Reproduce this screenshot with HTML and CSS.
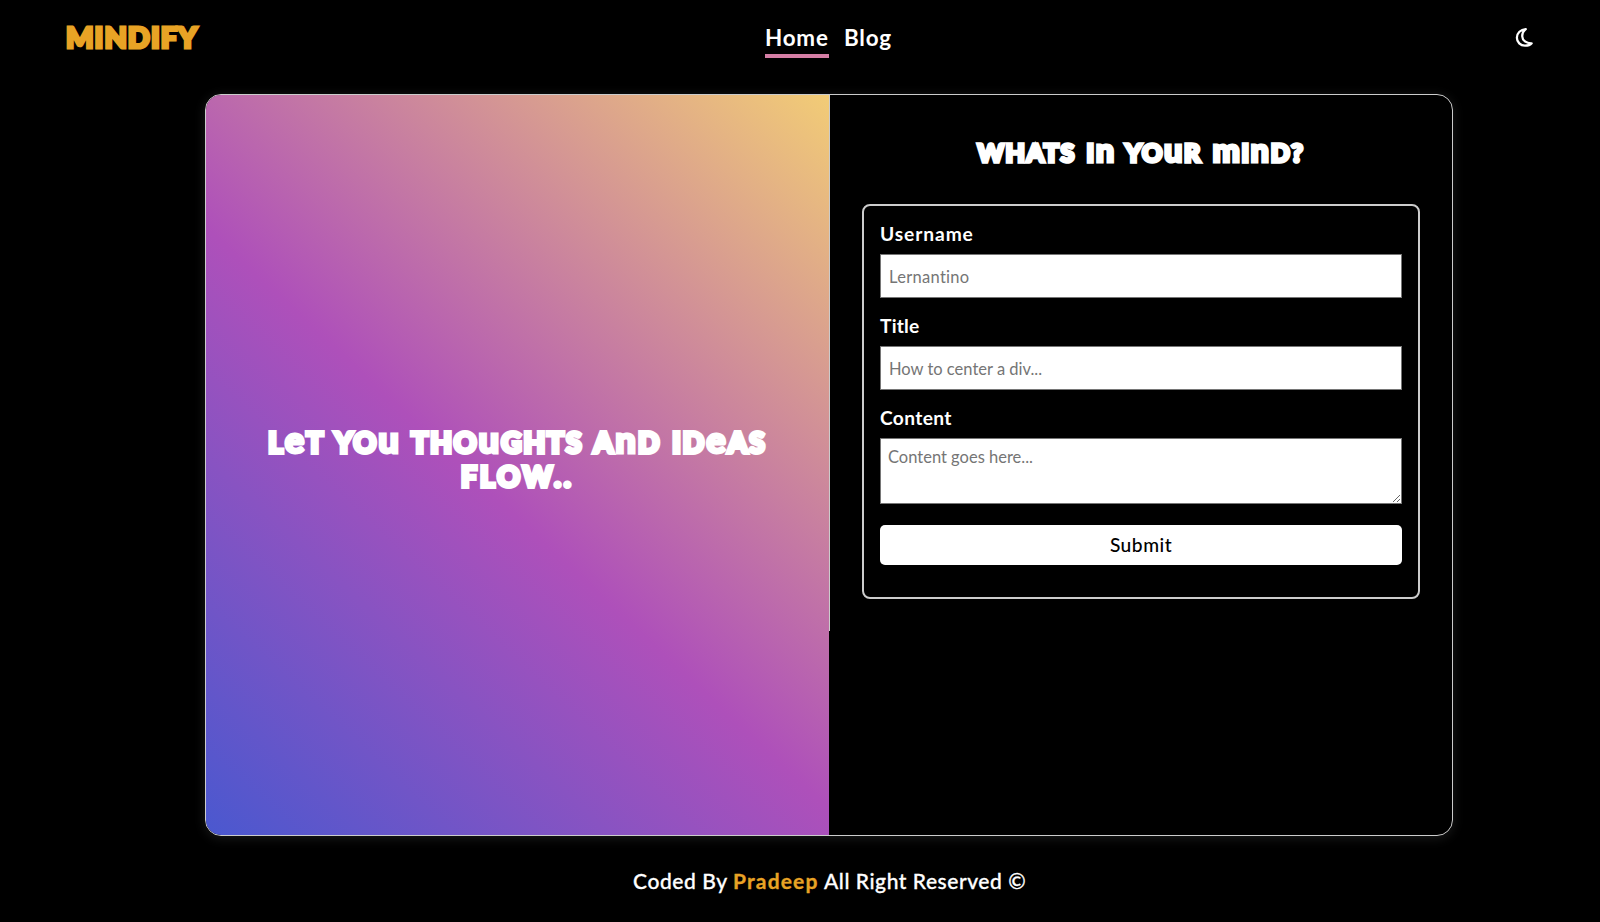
FILE: index.html
```html
<!DOCTYPE html>
<html lang="en">
<head>
<meta charset="utf-8">
<title>Mindify</title>
<link rel="stylesheet" href="styles.css">
</head>
<body>
<header class="header">
  <div class="logo">MINDIFY</div>
  <nav class="nav"><a class="link active"><span class="t-home">Home</span></a><a class="link"><span class="t-blog">Blog</span></a></nav>
  <div class="theme"><svg class="moon" viewBox="0 0 24 24" fill="none" stroke="#fff" stroke-width="2.6" stroke-linejoin="round"><path d="M13.400 2.400C7.600 2.800 3.300 6.800 3.300 12.200C3.300 17.400 7.400 21.400 12.500 21.400C15.800 21.400 18.600 20.600 20.200 18.600C14 18.800 9.600 15.500 9.400 10.500C9.300 7 10.900 4.500 13.400 2.400Z"/></svg></div>
</header>
<main class="card">
  <section class="hero">
    <h1 class="display hero-title"><span class="line l1">L<i>e</i>T YO<i>u</i> THO<i>u</i>GHTS A<i>n</i>D ID<i>e</i>AS</span><span class="line l2">FLOW..</span></h1>
  </section>
  <section class="side">
    <h2 class="display side-title"><span class="line l3">WHATS I<i>n</i> YO<i>u</i>R <i>m</i>I<i>n</i>D?</span></h2>
    <form class="form">
      <label class="label"><span class="t-user">Username</span></label>
      <input class="field f-user" placeholder="Lernantino">
      <label class="label"><span class="t-title">Title</span></label>
      <input class="field f-title" placeholder="How to center a div...">
      <label class="label"><span class="t-content">Content</span></label>
      <textarea class="field area" placeholder="Content goes here..."></textarea>
      <button class="submit" type="button">Submit</button>
    </form>
  </section>
</main>
<footer class="footer"><span class="f1">Coded By</span><b class="f2">Pradeep</b><span class="f3">All Right Reserved ©</span></footer>
</body>
</html>
```

FILE: styles.css
```css
* { box-sizing: border-box; }
body { margin: 0; height: 922px; overflow: hidden; background: #000; color: #fff; font-family: Lato, sans-serif; display: flex; flex-direction: column; }
.header { height: 94px; padding: 0 65px; display: flex; align-items: flex-start; }
.logo { width: 700px; padding: 17px 0 0 1px; font-weight: 900; font-size: 29px; line-height: 40px; color: #e8a325; -webkit-text-stroke: 3.2px #e8a325; letter-spacing: 1px; white-space: nowrap; }
.nav { display: flex; gap: 15px; padding-top: 22px; }
.link { height: 36px; line-height: 32px; font-size: 22.4px; font-weight: 700; white-space: nowrap; letter-spacing: .8px; }
.active { width: 64px; border-bottom: 4px solid #d57ea5; }
.theme { margin-left: auto; padding-top: 27px; }
.moon { display: block; width: 21px; height: 21px; }
.card { width: 1248px; height: 742px; margin-left: 205px; flex: none; display: grid; grid-template-columns: 623px 1fr; align-items: start; border: 1px solid #ccc; border-radius: 16px; overflow: hidden; box-shadow: 0 2px 12px rgba(210, 225, 220, .12); }
.hero { height: 740px; display: flex; align-items: center; justify-content: center; background: linear-gradient(43deg, #4a58cf 0%, #ae50ba 46%, #f2cc76 100%); }
.display { margin: 0; font-weight: 900; display: flex; flex-direction: column; align-items: center; white-space: nowrap; }
.display i { font-style: normal; font-size: 1.3em; line-height: 0; -webkit-text-stroke-width: 3px; }
.hero-title { font-size: 28px; line-height: 34px; letter-spacing: 2px; word-spacing: 2.5px; -webkit-text-stroke: 4px #fff; padding-bottom: 12px; }
.l2 { letter-spacing: 3.2px; }
.side { height: 536px; border-left: 1px solid #ccc; padding: 0 32px; }
.side-title { height: 109px; padding-top: 37px; font-size: 25px; line-height: 40px; letter-spacing: 1.6px; word-spacing: 3px; -webkit-text-stroke: 3.4px #fff; }
.form { height: 395px; border: 2px solid #ccc; border-radius: 8px; padding: 12px 16px 0; display: flex; flex-direction: column; }
.label { height: 36px; line-height: 32px; font-size: 19.2px; font-weight: 700; }
.t-user { letter-spacing: .9px; }
.t-title { letter-spacing: .2px; }
.t-content { letter-spacing: .35px; }
.field { flex: none; height: 44px; margin: 0 0 12px; padding: 2px 8px 0; border: 1px solid #767676; border-radius: 0; background: #fff; font: 400 16.5px Lato, sans-serif; }
.f-user { letter-spacing: .3px; }
.field::placeholder { color: #757575; opacity: 1; }
.area { height: 66px; margin-bottom: 21px; padding: 8px 7px; resize: vertical; }
.submit { flex: none; height: 40px; border: 0; border-radius: 5px; background: #fff; color: #000; font: 500 19.2px Lato, sans-serif; letter-spacing: .5px; padding: 0 0 2px; }
.footer { flex: none; height: 86px; padding: 29px 0 0 633px; display: flex; font-size: 21px; line-height: 32px; font-weight: 500; white-space: nowrap; -webkit-text-stroke-width: .3px; }
.f1 { width: 100px; letter-spacing: .6px; }
.f2 { width: 91px; color: #e8a325; letter-spacing: 1.15px; }
.f3 { letter-spacing: .55px; }
```
